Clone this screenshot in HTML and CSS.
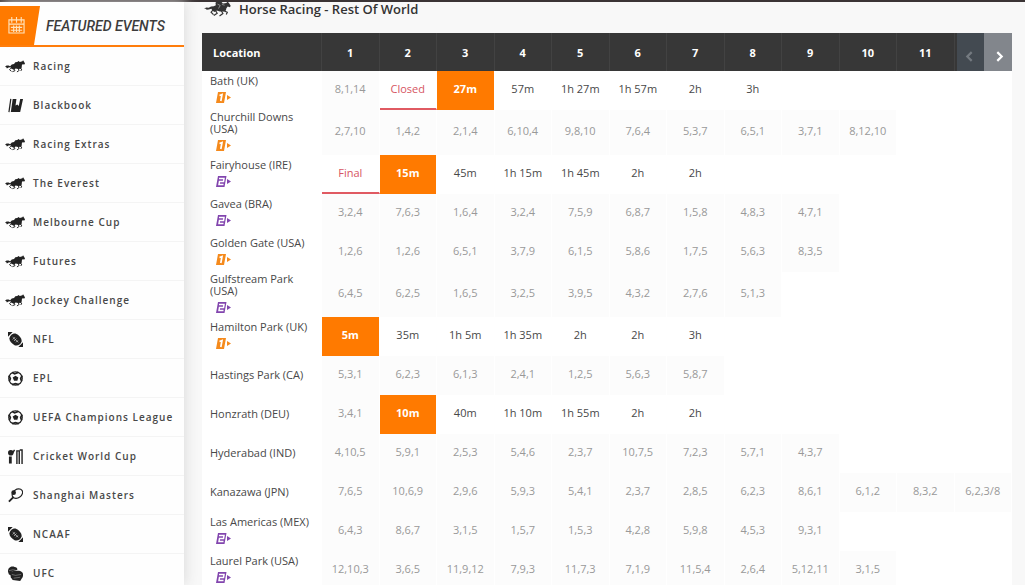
FILE: index.html
```html
<!DOCTYPE html>
<html lang="en">
<head>
<meta charset="utf-8">
<title>Horse Racing - Rest Of World</title>
<link rel="stylesheet" href="styles.css">
</head>
<body>
<svg class="sprite" aria-hidden="true">
  <symbol id="horse" viewBox="0 0 62 38">
    <path d="M0 20 5 16 11 16 16 18 21 13 28 11 32 6 38 5 42 2 46 5 54 3 56 0 59 4 62 10 60 13 54 12 52 17 52 22 48 26 41 27 33 25 28 29 20 26 17 21 11 22 6 25 4 21Z"/>
    <path d="M20 23 14 29 20 34M27 26 31 32 23 35M45 23 52 27 49 33M40 25 44 31 37 36" fill="none" stroke="currentColor" stroke-width="3"/>
  </symbol>
  <symbol id="jockey" viewBox="0 0 80 50">
    <path d="M0 25 7 22 14 23 21 19 29 18 35 15 34 8 38 4 45 3 48 0 53 1 55 6 52 9 58 10 66 9 70 5 74 9 79 17 77 21 70 19 66 25 65 31 59 34 47 34 38 31 32 35 25 32 22 26 14 28 8 29 5 26Z"/>
    <path d="M27 29 21 36 28 43M34 31 39 39 29 46M57 31 69 36 66 43M51 31 56 40 46 47" fill="none" stroke="currentColor" stroke-width="3.500"/>
    <path d="M40 12 48 16 43 25M53 13 61 15" fill="none" stroke="#ddd" stroke-width="1.500"/>
  </symbol>
  <symbol id="book" viewBox="0 0 16 16">
    <path d="M5 1H16L13 15H3Z"/><path d="M3 1 1 15" stroke="currentColor" stroke-width="1.300"/><path d="M9 1H13L11.500 8.500 10 7 8 8Z" fill="#fff"/>
  </symbol>
  <symbol id="football" viewBox="0 0 16 16">
    <path d="M0 0H5L0 5ZM16 16H11L16 11Z"/><path d="M1.500 7C2 3 6 .500 9 2 12 3.500 15 7 14.500 10 13.500 13.500 10 15 7 14 4 12.500 1.500 10 1.500 7Z"/><path d="M5 5.500 11 11M5 8 7.500 5.500M6.500 9.500 9 7M8.500 11 10.500 9" stroke="#ccc" stroke-width=".8"/>
  </symbol>
  <symbol id="soccer" viewBox="0 0 16 16">
    <circle cx="8" cy="8" r="7.200" fill="none" stroke="currentColor" stroke-width="1.300"/><path d="M8 5 11 7 10 10.500H6.500L5 7Z"/><path d="M4.500 1.500 7 3 11 1.500M1 5 2.500 8 1.500 11M15 5 13.500 8 14.500 11M4.500 14.500 8 13.500 11.500 14.500" fill="none" stroke="currentColor" stroke-width="1.800"/>
  </symbol>
  <symbol id="cricket" viewBox="0 0 16 16">
    <circle cx="3" cy="4" r="3"/><path d="M7 1 5 4" stroke="currentColor" stroke-width="1.500"/><path d="M2.500 8V15.500" stroke="currentColor" stroke-width="3"/><path d="M9.500 16V2H12V16M15 16V1H12.500" fill="none" stroke="currentColor" stroke-width="1.500"/>
  </symbol>
  <symbol id="tennis" viewBox="0 0 16 16">
    <ellipse cx="10" cy="6" rx="6" ry="4.500" transform="rotate(-35 10 6)" fill="none" stroke="currentColor" stroke-width="1.200"/><path d="M6 9.500 1 14.500" stroke="currentColor" stroke-width="2"/><circle cx="6" cy="5" r="2.500"/>
  </symbol>
  <symbol id="glove" viewBox="0 0 16 16">
    <path d="M0 6C0 1 4 0 7 1 9 1 10 2 10 4L7 5 4 6 4 10 1 9Z"/><path d="M2.500 9C2.500 6 5 5 8 5H12C16 6 17 9 15.500 12L13 16 5 15 3 12Z"/><path d="M1 5 5 4 8 4.500M4 9 8 10 14 9M6 13 13 12" fill="none" stroke="#bbb" stroke-width=".5"/>
  </symbol>
  <symbol id="calendar" viewBox="0 0 18 18">
    <path d="M1 3H17V17H1ZM1 7.500H17M4 0V6M9 0V6M14 0V6M3 11H15M3 14H15M6 9V16M9 9V16M12 9V16" fill="none" stroke="currentColor" stroke-width="1.200"/>
  </symbol>
  <symbol id="one" viewBox="0 0 15 11">
    <path d="M2 0H10L8 11H0ZM11 3 15 5.500 11 8Z"/><path d="M3.500 3.500 6 2.500 4.800 9" fill="none" stroke="#fff" stroke-width="1.700"/>
  </symbol>
  <symbol id="two" viewBox="0 0 15 11">
    <path d="M2 0H10.500L8.500 11H0ZM11 3 15 5.500 11 8Z"/><path d="M3 2.500H8L7.500 5.500H3.500L3 8.500H7.500" fill="none" stroke="#fff" stroke-width="1.500"/>
  </symbol>
</svg>
<div class="topbar"></div>
<div class="layout">
  <aside class="sidebar">
    <div class="featured">
      <span class="featured-icon"><svg><use href="#calendar"/></svg></span>
      <h2>FEATURED EVENTS</h2>
    </div>
    <nav class="events">
      <a href="#"><svg class="horse"><use href="#horse"/></svg>Racing</a>
      <a href="#"><svg><use href="#book"/></svg>Blackbook</a>
      <a href="#"><svg class="horse"><use href="#horse"/></svg>Racing Extras</a>
      <a href="#"><svg class="horse"><use href="#horse"/></svg>The Everest</a>
      <a href="#"><svg class="horse"><use href="#horse"/></svg>Melbourne Cup</a>
      <a href="#"><svg class="horse"><use href="#horse"/></svg>Futures</a>
      <a href="#"><svg class="horse"><use href="#horse"/></svg>Jockey Challenge</a>
      <a href="#"><svg><use href="#football"/></svg>NFL</a>
      <a href="#"><svg><use href="#soccer"/></svg>EPL</a>
      <a href="#"><svg><use href="#soccer"/></svg>UEFA Champions League</a>
      <a href="#"><svg><use href="#cricket"/></svg>Cricket World Cup</a>
      <a href="#"><svg><use href="#tennis"/></svg>Shanghai Masters</a>
      <a href="#"><svg><use href="#football"/></svg>NCAAF</a>
      <a href="#"><svg><use href="#glove"/></svg>UFC</a>
    </nav>
  </aside>
  <main class="content">
    <h1><svg><use href="#jockey"/></svg>Horse Racing - Rest Of World</h1>
    <table class="races">
      <thead>
        <tr><th class="location">Location</th><th>1</th><th>2</th><th>3</th><th>4</th><th>5</th><th>6</th><th>7</th><th>8</th><th>9</th><th>10</th><th>11</th>
        <th class="pager"><div><button type="button" aria-label="Previous races" disabled><svg viewBox="0 0 8 10"><path d="M6 1 2 5 6 9"/></svg></button><button type="button" aria-label="Next races"><svg viewBox="0 0 8 10"><path d="M2 1 6 5 2 9"/></svg></button></div></th></tr>
      </thead>
      <tbody>
        <tr><th>Bath (UK)<svg class="one"><use href="#one"/></svg></th><td class="done">8,1,14</td><td class="closed">Closed</td><td class="next">27m</td><td>57m</td><td>1h 27m</td><td>1h 57m</td><td>2h</td><td>3h</td></tr>
        <tr class="tall"><th>Churchill Downs (USA)<svg class="one"><use href="#one"/></svg></th><td class="done">2,7,10</td><td class="done">1,4,2</td><td class="done">2,1,4</td><td class="done">6,10,4</td><td class="done">9,8,10</td><td class="done">7,6,4</td><td class="done">5,3,7</td><td class="done">6,5,1</td><td class="done">3,7,1</td><td class="done">8,12,10</td></tr>
        <tr><th>Fairyhouse (IRE)<svg class="two"><use href="#two"/></svg></th><td class="closed">Final</td><td class="next">15m</td><td>45m</td><td>1h 15m</td><td>1h 45m</td><td>2h</td><td>2h</td></tr>
        <tr><th>Gavea (BRA)<svg class="two"><use href="#two"/></svg></th><td class="done">3,2,4</td><td class="done">7,6,3</td><td class="done">1,6,4</td><td class="done">3,2,4</td><td class="done">7,5,9</td><td class="done">6,8,7</td><td class="done">1,5,8</td><td class="done">4,8,3</td><td class="done">4,7,1</td></tr>
        <tr><th>Golden Gate (USA)<svg class="one"><use href="#one"/></svg></th><td class="done">1,2,6</td><td class="done">1,2,6</td><td class="done">6,5,1</td><td class="done">3,7,9</td><td class="done">6,1,5</td><td class="done">5,8,6</td><td class="done">1,7,5</td><td class="done">5,6,3</td><td class="done">8,3,5</td></tr>
        <tr class="tall"><th>Gulfstream Park (USA)<svg class="two"><use href="#two"/></svg></th><td class="done">6,4,5</td><td class="done">6,2,5</td><td class="done">1,6,5</td><td class="done">3,2,5</td><td class="done">3,9,5</td><td class="done">4,3,2</td><td class="done">2,7,6</td><td class="done">5,1,3</td></tr>
        <tr><th>Hamilton Park (UK)<svg class="one"><use href="#one"/></svg></th><td class="next">5m</td><td>35m</td><td>1h 5m</td><td>1h 35m</td><td>2h</td><td>2h</td><td>3h</td></tr>
        <tr><th class="plain">Hastings Park (CA)</th><td class="done">5,3,1</td><td class="done">6,2,3</td><td class="done">6,1,3</td><td class="done">2,4,1</td><td class="done">1,2,5</td><td class="done">5,6,3</td><td class="done">5,8,7</td></tr>
        <tr><th class="plain">Honzrath (DEU)</th><td class="done">3,4,1</td><td class="next">10m</td><td>40m</td><td>1h 10m</td><td>1h 55m</td><td>2h</td><td>2h</td></tr>
        <tr><th class="plain">Hyderabad (IND)</th><td class="done">4,10,5</td><td class="done">5,9,1</td><td class="done">2,5,3</td><td class="done">5,4,6</td><td class="done">2,3,7</td><td class="done">10,7,5</td><td class="done">7,2,3</td><td class="done">5,7,1</td><td class="done">4,3,7</td></tr>
        <tr><th class="plain">Kanazawa (JPN)</th><td class="done">7,6,5</td><td class="done">10,6,9</td><td class="done">2,9,6</td><td class="done">5,9,3</td><td class="done">5,4,1</td><td class="done">2,3,7</td><td class="done">2,8,5</td><td class="done">6,2,3</td><td class="done">8,6,1</td><td class="done">6,1,2</td><td class="done">8,3,2</td><td class="done">6,2,3/8</td></tr>
        <tr><th>Las Americas (MEX)<svg class="two"><use href="#two"/></svg></th><td class="done">6,4,3</td><td class="done">8,6,7</td><td class="done">3,1,5</td><td class="done">1,5,7</td><td class="done">1,5,3</td><td class="done">4,2,8</td><td class="done">5,9,8</td><td class="done">4,5,3</td><td class="done">9,3,1</td></tr>
        <tr><th>Laurel Park (USA)<svg class="two"><use href="#two"/></svg></th><td class="done">12,10,3</td><td class="done">3,6,5</td><td class="done">11,9,12</td><td class="done">7,9,3</td><td class="done">11,7,3</td><td class="done">7,1,9</td><td class="done">11,5,4</td><td class="done">2,6,4</td><td class="done">5,12,11</td><td class="done">3,1,5</td></tr>
      </tbody>
    </table>
  </main>
</div>
</body>
</html>
```
FILE: styles.css
```css
* { box-sizing: border-box; }
body {
  margin: 0;
  height: 100vh;
  overflow: hidden;
  display: flex;
  flex-direction: column;
  background: #f8f8f8;
  color: #484848;
  font-family: "Open Sans", "Noto Sans", sans-serif;
}
svg { display: block; fill: currentColor; flex: none; }
.sprite { display: none; }
.topbar { flex: none; height: 2px; background: #3b3435; }
.layout { flex: 1; display: flex; min-height: 0; }

.sidebar {
  flex: none;
  width: 184px;
  padding-top: 4px;
  background: #fefefe;
  box-shadow: 2px 0 12px #dedede;
}
.featured {
  display: flex;
  align-items: center;
  height: 41px;
  border-bottom: 2px solid #ff7d0c;
}
.featured-icon {
  width: 40px;
  height: 39px;
  padding: 11px 8px;
  background: #ff7a00;
  color: #ffe3bd;
  clip-path: polygon(0 0, 100% 0, 34px 100%, 0 100%);
}
.featured-icon svg { width: 17px; height: 17px; }
.featured h2 {
  margin: 0 0 0 6px;
  font: italic 500 14px/20px Roboto, sans-serif;
  color: #3c3c3c;
}
.events a {
  display: flex;
  align-items: center;
  gap: 10px;
  height: 39px;
  padding-left: 8px;
  border-bottom: 1px solid #f4f4f4;
  color: #484848;
  font-size: 10px;
  font-weight: 600;
  letter-spacing: 1px;
  white-space: nowrap;
  text-decoration: none;
}
.events svg { width: 15px; height: 15px; color: #222; }
.events .horse { width: 20px; height: 13px; margin-left: -3px; margin-right: -2px; }

.content { flex: 1; padding: 0 13px 0 18px; }
h1 {
  display: flex;
  align-items: center;
  gap: 8px;
  height: 13px;
  margin: 0 0 18px;
  padding-left: 2px;
  font-size: 13px;
  font-weight: 600;
  color: #333;
}
h1 svg { width: 27px; height: 17px; }

.races {
  width: 100%;
  table-layout: fixed;
  border-spacing: 0;
  background: #fff;
}
.races thead th {
  height: 38px;
  padding: 0;
  background: #373737;
  border-right: 1px solid #424242;
  color: #fff;
  font-size: 11px;
  font-weight: 700;
}
.races .location { width: 120px; padding-left: 11px; text-align: left; }
.races thead .pager { border: 0; }
.pager div { display: flex; height: 38px; padding-left: 2px; }
.pager button {
  flex: 1;
  display: grid;
  place-items: center;
  padding: 8px 0 0 2px;
  border: 0;
  background: #82868c;
  color: #fff;
}
.pager button:disabled { background: #434a51; color: #747a80; padding: 8px 2px 0 0; }
.pager svg { width: 9px; height: 11px; fill: none; stroke: currentColor; stroke-width: 2; }

.races tbody th {
  height: 39px;
  padding: 0 12px 3px 8px;
  font-size: 11px;
  font-weight: 400;
  line-height: 12px;
  text-align: left;
}
.races tbody .plain { padding-bottom: 2px; }
.races .tall th { height: 45px; }
.races tbody svg { width: 15px; height: 11px; margin: 5px 0 0 6px; }
.one { color: #f58a1c; }
.two { color: #8245ae; }
.races td {
  padding: 0 0 4px;
  border-right: 1px solid #fff;
  font-size: 11px;
  text-align: center;
  white-space: nowrap;
}
.races .done { background: #fcfcfc; color: #999; }
.races .closed { padding-bottom: 2px; border-bottom: 2px solid #e05a62; color: #d65562; }
.races .next { background: #ff7a00; color: #fff; font-weight: 700; }
```
